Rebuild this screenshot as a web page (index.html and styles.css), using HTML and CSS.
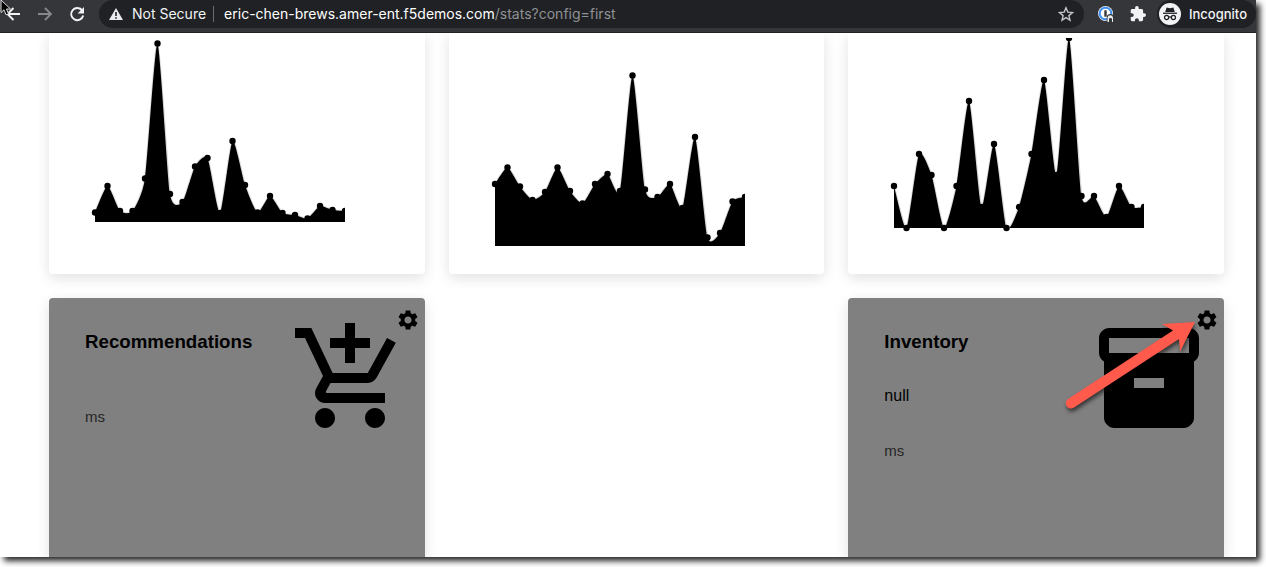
FILE: index.html
```html
<!DOCTYPE html>
<html lang="en">
<head>
<meta charset="utf-8">
<title>Stats</title>
<link rel="stylesheet" href="styles.css">
</head>
<body>
<div class="window">
  <header class="toolbar">
    <nav class="nav">
      <button class="icon-btn" aria-label="Back"><svg viewBox="0 0 16 16"><path d="M15 8H3M8.500 2 2.500 8l6 6" fill="none" stroke="#f1f3f4" stroke-width="1.900"/></svg></button>
      <button class="icon-btn" aria-label="Forward"><svg viewBox="0 0 16 16"><path d="M1 8h12M8 2l6 6-6 6" fill="none" stroke="#86888a" stroke-width="1.800"/></svg></button>
      <button class="icon-btn" aria-label="Reload"><svg viewBox="0 0 16 16"><path d="M13.300 4.600A6.100 6.100 0 1 0 14.200 9.500" fill="none" stroke="#f1f3f4" stroke-width="1.900"/><path d="M15 1v6.400H8.600z" fill="#f1f3f4"/></svg></button>
    </nav>
    <div class="omnibox">
      <button class="security"><svg viewBox="0 0 14 14"><path fill-rule="evenodd" d="M7 1 14 13H0zM6.200 5v4h1.600V5zm0 5.200v1.600h1.600v-1.600z" fill="#e8eaed"/></svg>Not Secure</button>
      <div class="url"><span>eric-chen-brews.amer-ent.f5demos.com</span><span class="path">/stats?config=first</span></div>
      <button class="icon-btn" aria-label="Bookmark"><svg viewBox="0 0 16 16"><path d="m8 1.800 1.800 4.300 4.700.4-3.600 3.100 1.100 4.600-4-2.500-4 2.500 1.100-4.600-3.600-3.100 4.700-.4z" fill="none" stroke="#c4c6c9" stroke-width="1.400"/></svg></button>
    </div>
    <div class="extensions">
      <button class="icon-btn" aria-label="Password manager"><svg viewBox="0 0 16 16"><circle cx="7.500" cy="7.500" r="7.500" fill="#eceff1"/><circle cx="7.500" cy="7.500" r="5.800" fill="#fff" stroke="#3c8ff0" stroke-width="2"/><path d="M6.300 4.300h2.400v6.400H6.300z" fill="#35363a"/><path d="M8.700 16V11.500a3.500 3.500 0 0 1 7 0V16z" fill="#35363a"/><path d="M9.500 16v-4.500a2.800 2.800 0 0 1 5.500 0V16h-1.800v-4h-1.800v4z" fill="#eceff1"/><path d="M11 12.500h3V16h-3z" fill="#35363a"/></svg></button>
      <button class="icon-btn" aria-label="Extensions"><svg viewBox="1 1 22 22"><path d="M20.500 11H19V7c0-1.100-.9-2-2-2h-4V3.500a2.500 2.500 0 0 0-5 0V5H4c-1.100 0-2 .9-2 2v3.800h1.500a2.700 2.700 0 0 1 0 5.400H2V20c0 1.100.9 2 2 2h3.800v-1.500a2.700 2.700 0 0 1 5.400 0V22H17c1.100 0 2-.9 2-2v-4h1.500a2.500 2.500 0 0 0 0-5z" fill="#f1f3f4"/></svg></button>
    </div>
    <button class="incognito"><svg viewBox="0 0 22 22"><circle cx="11" cy="11" r="11" fill="#f1f3f4"/><path d="M7.600 4.500 11 5.200l3.400-.7 1.400 4.500H6.200z" fill="#202124"/><path d="M4 9.600h14v1.300H4z" fill="#202124"/><g fill="none" stroke="#202124" stroke-width="1.200"><circle cx="7.600" cy="14.500" r="2.100"/><circle cx="14.400" cy="14.500" r="2.100"/><path d="M9.700 14.300q1.300-.8 2.600 0"/></g></svg>Incognito</button>
    <svg class="cursor" viewBox="0 0 11 16"><path d="M1 0v12.500l3-2.700 2 5 2.500-1-2-4.800h4z" fill="#000" stroke="#ddd" stroke-width="1"/></svg>
  </header>
  <main class="board">
    <section class="card chart-card"><svg class="chart" viewBox="0 0 254 212" data-base="184" data-points="174.500 148 173 173 140.500 5.500 156 164 128.500 120 175 103 147 174.500 158 175 177 180.500 168 172 173"></svg></section>
    <section class="card chart-card"><svg class="chart" viewBox="0 0 254 212" data-base="208" data-points="146 129.500 148.500 162 154 129.500 153 165.500 146 136 153 37.500 151.500 159 146 170 99 199.500 195 163.500 159"></svg></section>
    <section class="card chart-card"><svg class="chart" viewBox="0 0 254 212" data-base="190" data-points="148 190 116 137 190 148 63 169 106 190 169 116 42 137 0 158 158 179 148 169 169"></svg></section>
    <section class="card service">
      <div class="info">
        <h3>Recommendations</h3>
        <p class="value"></p>
        <p class="latency">ms</p>
      </div>
      <svg class="picture" viewBox="0 0 24 24"><path d="M11 9h2V6h3V4h-3V1h-2v3H8v2h3v3zm-4 9c-1.100 0-1.990.9-1.990 2S5.900 22 7 22s2-.9 2-2-.9-2-2-2zm10 0c-1.100 0-1.990.9-1.990 2s.89 2 1.990 2 2-.9 2-2-.9-2-2-2zm-9.830-3.250l.03-.12.9-1.630h7.450c.75 0 1.410-.41 1.750-1.030l3.860-7.010L19.420 4h-.01l-1.100 2-2.760 5H8.530l-.13-.27L6.160 6l-.95-2-.94-2H1v2h2l3.600 7.590-1.350 2.450c-.16.28-.25.61-.25.96 0 1.100.9 2 2 2h12v-2H7.420c-.13 0-.25-.11-.25-.25z"/></svg>
      <button class="settings" aria-label="Recommendations settings"><svg viewBox="0 0 24 24"><use href="#gear"/></svg></button>
    </section>
    <section class="card service inventory">
      <div class="info">
        <h3>Inventory</h3>
        <p class="value">null</p>
        <p class="latency">ms</p>
      </div>
      <svg class="picture" viewBox="0 0 24 24"><path d="M20 2H4c-1 0-2 .9-2 2v3.010c0 .72.43 1.340 1 1.690V20c0 1.100 1.100 2 2 2h14c.9 0 2-.9 2-2V8.700c.57-.35 1-.97 1-1.690V4c0-1.100-1-2-2-2zm-5 12H9v-2h6v2zm5-7H4V4h16v3z"/></svg>
      <button class="settings" aria-label="Inventory settings"><svg viewBox="0 0 24 24"><path id="gear" d="M19.140 12.940c.04-.3.06-.61.06-.94 0-.32-.02-.64-.07-.94l2.030-1.580c.18-.14.23-.41.12-.61l-1.920-3.320c-.12-.22-.37-.29-.59-.22l-2.390.96c-.5-.38-1.030-.7-1.620-.94l-.36-2.540c-.04-.24-.24-.41-.48-.41h-3.840c-.24 0-.43.17-.47.41l-.36 2.540c-.59.24-1.130.57-1.620.94l-2.390-.96c-.22-.08-.47 0-.59.22L2.740 8.870c-.12.21-.08.47.12.61l2.030 1.580c-.05.3-.09.63-.09.94s.02.64.07.94l-2.030 1.580c-.18.14-.23.41-.12.61l1.920 3.320c.12.22.37.29.59.22l2.390-.96c.5.38 1.030.7 1.620.94l.36 2.540c.05.24.24.41.48.41h3.840c.24 0 .44-.17.47-.41l.36-2.540c.59-.24 1.130-.56 1.620-.94l2.390.96c.22.08.47 0 .59-.22l1.920-3.320c.12-.22.07-.47-.12-.61l-2.010-1.580zM12 15.600c-1.980 0-3.600-1.620-3.600-3.600s1.620-3.600 3.600-3.600 3.600 1.620 3.600 3.600-1.620 3.600-3.600 3.600z"/></svg></button>
      <svg class="pointer" viewBox="0 0 140 100"><path d="M131 8 98 10l11 6.500L4 85a5.200 5.200 0 0 0 6 8.500L115 25l1 12.700z" fill="#ff5a4c"/></svg>
    </section>
  </main>
</div>
<script src="chart.js"></script>
</body>
</html>
```
FILE: styles.css
```css
* { box-sizing: border-box; }
body { margin: 0; background: #fff; font-family: "Liberation Sans", Arial, sans-serif; padding: 0 10px 10px 0; height: 100vh; overflow: hidden; }
button { border: 0; margin: 0; padding: 0; background: none; color: inherit; font: inherit; }
svg { display: block; flex: none; }
h3, p { margin: 0; }

.window { height: 100%; display: flex; flex-direction: column; background: #fff; box-shadow: 4px 4px 6px rgba(0, 0, 0, .85); }

.toolbar { position: relative; z-index: 1; flex: none; height: 33px; padding-left: 5px; display: flex; align-items: flex-start; background: #35363a; border-bottom: 1px solid #202124; color: #f1f3f4; font: 500 13px/28px Inter, sans-serif; }
.nav, .extensions { display: flex; align-items: center; gap: 16px; height: 28px; }
.extensions { margin: 0 11px 0 14px; }
.icon-btn, .icon-btn svg { width: 16px; height: 16px; }
.omnibox { flex: 1; min-width: 0; height: 28px; margin-left: 14px; padding: 0 10px; display: flex; align-items: center; background: #202124; border-radius: 14px; font-size: 14px; font-weight: 400; }
.security { display: flex; align-items: center; gap: 9px; padding-right: 7px; line-height: 16px; border-right: 1px solid #6b6d70; white-space: nowrap; }
.security svg { width: 14px; height: 14px; }
.url { flex: 1; min-width: 0; padding-left: 10px; white-space: nowrap; overflow: hidden; color: #fff; }
.path { color: #8f9195; }
.incognito { display: flex; align-items: center; gap: 8px; height: 28px; padding: 0 9px 0 2px; background: #202124; border-radius: 14px; }
.incognito svg { width: 22px; height: 22px; }
.cursor { position: absolute; left: 0; top: 0; width: 11px; height: 16px; }

.board { flex: 1; min-height: 0; overflow: hidden; display: grid; grid-template-columns: repeat(3, 1fr); grid-template-rows: auto 1fr; gap: 24px; padding: 0 32px 0 49px; }
.card { position: relative; background: #fff; box-shadow: 0 4px 14px rgba(0, 0, 0, .12); }
.chart-card { padding: 5px 42px 24px; border-radius: 0 0 4px 4px; }
.chart { width: 254px; height: 212px; }
.service { display: flex; justify-content: space-between; align-items: flex-start; padding: 20px 15px 0 36px; background: #808080; border-radius: 4px 4px 0 0; }
.inventory { grid-column: 3; }
.info { display: flex; flex-direction: column; padding-top: 13px; }
.info h3 { line-height: 22px; }
.value { margin-top: 34px; font-size: 16px; line-height: 18px; }
.value:empty { margin-top: 18px; }
.latency { margin-top: 37px; font-size: 15px; line-height: 18px; color: #262626; }
.picture { width: 120px; height: 120px; }
.settings { position: absolute; top: 10px; right: 5px; }
.settings svg { width: 24px; height: 24px; }
.pointer { position: absolute; top: 16px; right: 20px; width: 140px; height: 100px; filter: drop-shadow(1px 3px 2px rgba(0, 0, 0, .6)); }
```
FILE: chart.js
```javascript
const step = 12.5;
const left = 4;
const smoothing = 0.1;

document.querySelectorAll(".chart").forEach((chart) => {
  const base = Number(chart.dataset.base);
  const points = chart.dataset.points.split(" ").map((y, i) => [left + i * step, Number(y)]);
  const at = (i) => points[Math.max(0, Math.min(points.length - 1, i))];
  const bend = (from, to, axis) => (to[axis] - from[axis]) * smoothing;
  let curve = "";
  for (let i = 0; i < points.length - 1; i++) {
    const [a, b, c, d] = [at(i - 1), at(i), at(i + 1), at(i + 2)];
    curve += `C${b[0] + bend(a, c, 0)} ${b[1] + bend(a, c, 1)} ${c[0] - bend(b, d, 0)} ${c[1] - bend(b, d, 1)} ${c[0]} ${c[1]}`;
  }
  const end = at(points.length - 1)[0];
  const line = `M${points[0].join(" ")}${curve}`;
  const dots = points.map(([x, y]) => `<circle cx="${x}" cy="${y}" r="3.2"/>`).join("");
  chart.innerHTML = `<path d="${line}" fill="none" stroke="#000" stroke-opacity=".15" stroke-width="2"/><path d="${line}V${base}H${left}z"/>${dots}`;
});
```
